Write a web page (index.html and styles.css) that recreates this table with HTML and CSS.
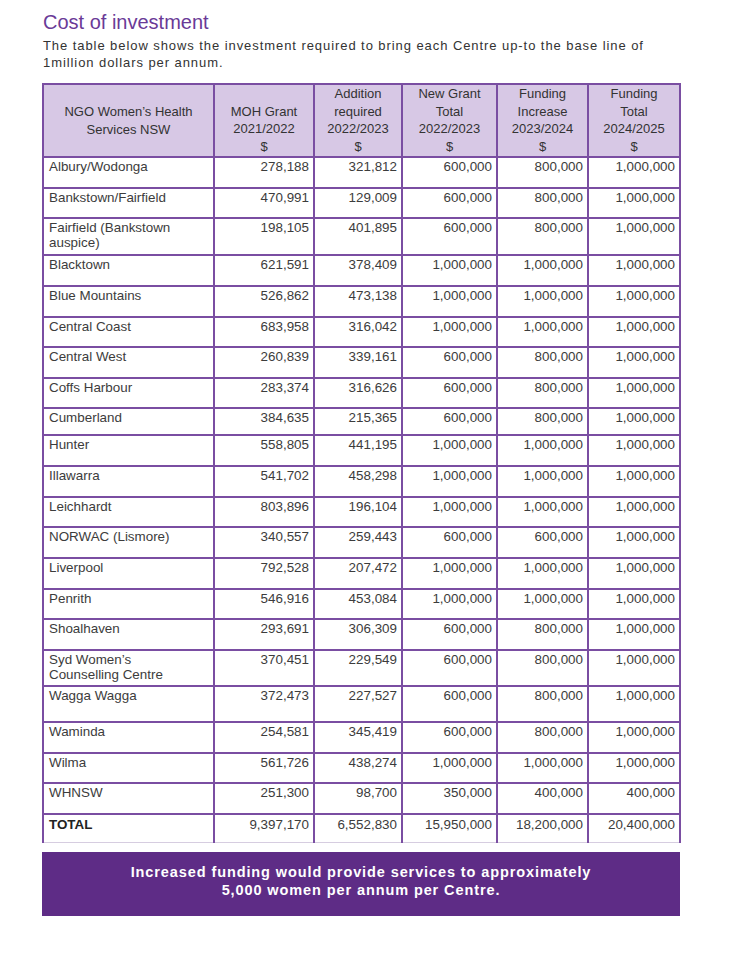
FILE: index.html
```html
<!DOCTYPE html>
<html lang="en">
<head>
<meta charset="utf-8">
<title>Cost of investment</title>
<link rel="stylesheet" href="styles.css">
</head>
<body>
<main class="page">
  <h1 class="title">Cost of investment</h1>
  <p class="intro">The table below shows the investment required to bring each Centre up-to the base line of 1million dollars per annum.</p>
  <table class="grid">
    <colgroup>
      <col class="c-name"><col class="c-moh"><col class="c-add"><col class="c-new"><col class="c-inc"><col class="c-tot">
    </colgroup>
    <thead>
      <tr>
        <th class="th-name">NGO Women’s Health<br>Services NSW</th>
        <th>MOH Grant<br>2021/2022<br>$</th>
        <th>Addition<br>required<br>2022/2023<br>$</th>
        <th>New Grant<br>Total<br>2022/2023<br>$</th>
        <th>Funding<br>Increase<br>2023/2024<br>$</th>
        <th>Funding<br>Total<br>2024/2025<br>$</th>
      </tr>
    </thead>
    <tbody>
      <tr><td>Albury/Wodonga</td><td>278,188</td><td>321,812</td><td>600,000</td><td>800,000</td><td>1,000,000</td></tr>
      <tr><td>Bankstown/Fairfield</td><td>470,991</td><td>129,009</td><td>600,000</td><td>800,000</td><td>1,000,000</td></tr>
      <tr class="row-37"><td>Fairfield (Bankstown auspice)</td><td>198,105</td><td>401,895</td><td>600,000</td><td>800,000</td><td>1,000,000</td></tr>
      <tr><td>Blacktown</td><td>621,591</td><td>378,409</td><td>1,000,000</td><td>1,000,000</td><td>1,000,000</td></tr>
      <tr><td>Blue Mountains</td><td>526,862</td><td>473,138</td><td>1,000,000</td><td>1,000,000</td><td>1,000,000</td></tr>
      <tr><td>Central Coast</td><td>683,958</td><td>316,042</td><td>1,000,000</td><td>1,000,000</td><td>1,000,000</td></tr>
      <tr><td>Central West</td><td>260,839</td><td>339,161</td><td>600,000</td><td>800,000</td><td>1,000,000</td></tr>
      <tr><td>Coffs Harbour</td><td>283,374</td><td>316,626</td><td>600,000</td><td>800,000</td><td>1,000,000</td></tr>
      <tr class="row-27"><td>Cumberland</td><td>384,635</td><td>215,365</td><td>600,000</td><td>800,000</td><td>1,000,000</td></tr>
      <tr><td>Hunter</td><td>558,805</td><td>441,195</td><td>1,000,000</td><td>1,000,000</td><td>1,000,000</td></tr>
      <tr><td>Illawarra</td><td>541,702</td><td>458,298</td><td>1,000,000</td><td>1,000,000</td><td>1,000,000</td></tr>
      <tr><td>Leichhardt</td><td>803,896</td><td>196,104</td><td>1,000,000</td><td>1,000,000</td><td>1,000,000</td></tr>
      <tr><td>NORWAC (Lismore)</td><td>340,557</td><td>259,443</td><td>600,000</td><td>600,000</td><td>1,000,000</td></tr>
      <tr><td>Liverpool</td><td>792,528</td><td>207,472</td><td>1,000,000</td><td>1,000,000</td><td>1,000,000</td></tr>
      <tr><td>Penrith</td><td>546,916</td><td>453,084</td><td>1,000,000</td><td>1,000,000</td><td>1,000,000</td></tr>
      <tr><td>Shoalhaven</td><td>293,691</td><td>306,309</td><td>600,000</td><td>800,000</td><td>1,000,000</td></tr>
      <tr class="row-36"><td>Syd Women’s Counselling Centre</td><td>370,451</td><td>229,549</td><td>600,000</td><td>800,000</td><td>1,000,000</td></tr>
      <tr class="row-36"><td>Wagga Wagga</td><td>372,473</td><td>227,527</td><td>600,000</td><td>800,000</td><td>1,000,000</td></tr>
      <tr><td>Waminda</td><td>254,581</td><td>345,419</td><td>600,000</td><td>800,000</td><td>1,000,000</td></tr>
      <tr><td>Wilma</td><td>561,726</td><td>438,274</td><td>1,000,000</td><td>1,000,000</td><td>1,000,000</td></tr>
      <tr><td>WHNSW</td><td>251,300</td><td>98,700</td><td>350,000</td><td>400,000</td><td>400,000</td></tr>
      <tr class="row-total"><td>TOTAL</td><td>9,397,170</td><td>6,552,830</td><td>15,950,000</td><td>18,200,000</td><td>20,400,000</td></tr>
    </tbody>
  </table>
  <div class="callout">Increased funding would provide services to approximately<br>5,000 women per annum per Centre.</div>
</main>
</body>
</html>
```
FILE: styles.css
```css
html, body {
  margin: 0;
  padding: 0;
  background: #ffffff;
}

.page {
  padding: 10px 0 0 42px;
  font-family: "Liberation Sans", Arial, sans-serif;
  color: #3a3a3a;
}

.title {
  margin: 0 0 0 1px;
  font-size: 20px;
  font-weight: normal;
  line-height: 24px;
  color: #6a3a97;
}

.intro {
  margin: 3px 0 0 1px;
  width: 640px;
  font-size: 13px;
  line-height: 17px;
  letter-spacing: 0.93px;
  color: #333333;
}

.grid {
  margin-top: 12px;
  border-collapse: collapse;
  table-layout: fixed;
  width: 635px;
  font-size: 13.4px;
  color: #3c3c3c;
}

.c-name { width: 171px; }
.c-moh { width: 100px; }
.c-add { width: 88px; }
.c-new { width: 95px; }
.c-inc { width: 91px; }
.c-tot { width: 92px; }

.grid th,
.grid td {
  border: 2px solid #7a4ea2;
}

.grid th {
  height: 70px;
  padding: 0 2px 1px;
  background: #d7c8e5;
  font-weight: normal;
  font-size: 13px;
  line-height: 17.5px;
  text-align: center;
  vertical-align: bottom;
  color: #333333;
}

.grid th.th-name {
  vertical-align: middle;
  padding-bottom: 0;
}

.grid tbody tr {
  height: 30.65px;
}

.grid td {
  padding: 1px 4px 0 5px;
  line-height: 15px;
  vertical-align: top;
  text-align: right;
}

.grid td:first-child {
  text-align: left;
  padding-right: 22px;
}

.grid tbody tr.row-37 { height: 37px; }
.grid tbody tr.row-36 { height: 36px; }
.grid tbody tr.row-27 { height: 27px; }
.grid tbody tr.row-total { height: 29px; }

.grid tr.row-total td {
  padding-top: 2px;
  border-bottom: 1px solid #d6cde0;
}

.grid tr.row-total td:first-child {
  font-weight: bold;
  color: #222222;
}

.callout {
  margin-top: 9px;
  width: 638px;
  box-sizing: border-box;
  height: 64px;
  padding-top: 11px;
  background: #5e2c86;
  color: #ffffff;
  font-weight: bold;
  font-size: 14.5px;
  line-height: 18px;
  letter-spacing: 0.9px;
  text-align: center;
}
```
